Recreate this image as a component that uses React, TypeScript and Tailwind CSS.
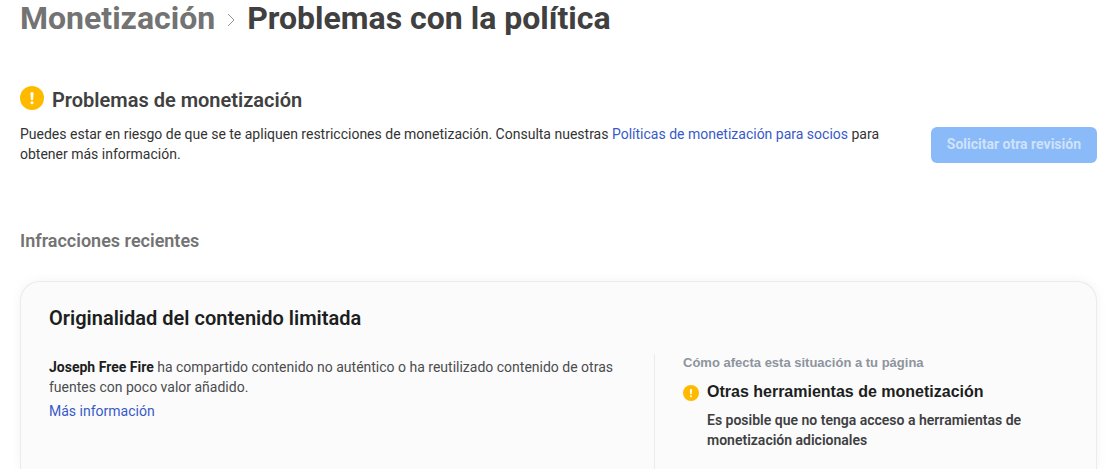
type AlertIconProps = { className: string };

function AlertIcon({ className }: AlertIconProps) {
  return (
    <svg viewBox="0 0 24 24" className={className} aria-hidden="true">
      <circle cx="12" cy="12" r="12" fill="#ffba00" />
      <path
        d="M10.4 7.6a1.6 1.6 0 0 1 3.2 0l-.5 5.6a1.1 1.1 0 0 1-2.2 0z"
        fill="#fff"
      />
      <circle cx="12" cy="16.8" r="1.5" fill="#fff" />
    </svg>
  );
}

export default function App() {
  return (
    <main className="flex min-h-screen flex-col bg-white pr-3 pl-5 font-['Roboto',sans-serif] text-sm leading-5 text-[#3e4042]">
      <nav aria-label="Ruta" className="flex items-center text-[32px] leading-9 font-bold">
        <a href="#monetizacion" className="text-[#737373]">
          Monetización
        </a>
        <svg
          viewBox="0 0 8 14"
          className="mx-3 mt-1 h-3.5 w-2"
          fill="none"
          stroke="#8d949e"
          strokeWidth="1"
          aria-hidden="true"
        >
          <path d="M1 1l6 6-6 6" />
        </svg>
        <h1 className="text-[#404040]">Problemas con la política</h1>
      </nav>

      <section className="mt-12 flex items-end justify-between gap-8">
        <div className="max-w-[864px]">
          <div className="flex gap-2">
            <AlertIcon className="mt-0.5 size-6" />
            <h2 className="pt-0.5 text-xl leading-7 font-semibold text-[#404040]">
              Problemas de monetización
            </h2>
          </div>
          <p className="mt-2.5 text-[#333]">
            Puedes estar en riesgo de que se te apliquen restricciones de monetización. Consulta
            nuestras{" "}
            <a href="#politicas" className="text-[#385ac8]">
              Políticas de monetización para socios
            </a>{" "}
            para obtener más información.
          </p>
        </div>
        <button
          type="button"
          disabled
          className="mb-px h-9 shrink-0 rounded-md bg-[#8bbaf9] px-4 pb-0.5 font-bold text-[#cfe2fc]"
        >
          Solicitar otra revisión
        </button>
      </section>

      <h2 className="mt-[65px] text-lg leading-6 font-semibold text-[#737373]">
        Infracciones recientes
      </h2>

      <section className="mt-7 flex grow flex-col rounded-t-[20px] border border-b-0 border-[#e9ebee] bg-[#fbfbfb] px-7 pt-6 shadow-[0_0_12px_rgba(0,0,0,0.05)]">
        <h3 className="text-xl leading-6 font-semibold text-[#1c1e21]">
          Originalidad del contenido limitada
        </h3>
        <div className="mt-6 flex grow">
          <div className="w-[606px] border-r border-[#e9ebee] pt-[3px] pr-8">
            <p className="text-[#4b4c4f]">
              <strong className="font-bold text-[#1c1e21]">Joseph Free Fire</strong> ha compartido
              contenido no auténtico o ha reutilizado contenido de otras fuentes con poco valor
              añadido.
            </p>
            <a href="#mas-informacion" className="mt-1 inline-block text-[#385ac8]">
              Más información
            </a>
          </div>
          <div className="flex-1 pl-7">
            <h4 className="font-['Liberation_Sans',sans-serif] text-[13px] leading-[18px] font-bold text-[#8d949e]">
              Cómo afecta esta situación a tu página
            </h4>
            <div className="mt-2 flex gap-2">
              <AlertIcon className="mt-[5px] size-4 shrink-0" />
              <div>
                <h5 className="font-['Liberation_Sans',sans-serif] text-base leading-6 font-bold text-[#1c1e21]">
                  Otras herramientas de monetización
                </h5>
                <p className="mt-1.5 max-w-[340px] font-semibold">
                  Es posible que no tenga acceso a herramientas de monetización adicionales
                </p>
              </div>
            </div>
          </div>
        </div>
      </section>
    </main>
  );
}
